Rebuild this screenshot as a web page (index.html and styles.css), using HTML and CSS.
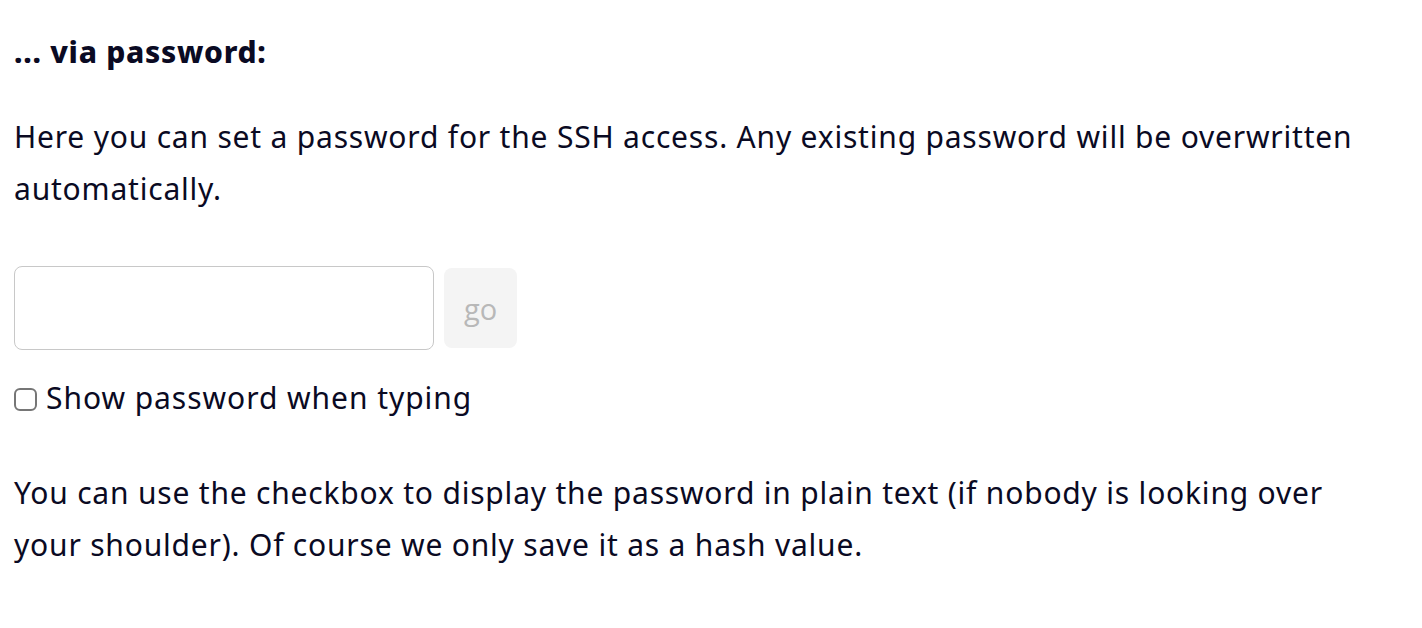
FILE: index.html
```html
<!DOCTYPE html>
<html lang="en">
<head>
<meta charset="utf-8">
<title>SSH password</title>
<link rel="stylesheet" href="styles.css">
</head>
<body>
<main class="page">
  <h3 class="title">... via password:</h3>
  <p class="text intro">Here you can set a password for the SSH access. Any existing password will be overwritten automatically.</p>
  <form class="pw-form">
    <input class="pw-input" type="password">
    <button class="go-btn" type="button" disabled>go</button>
  </form>
  <label class="show-row"><span class="box"></span><span class="show-label">Show password when typing</span></label>
  <p class="text outro">You can use the checkbox to display the password in plain text (if nobody is looking over your shoulder). Of course we only save it as a hash value.</p>
</main>
</body>
</html>
```

FILE: styles.css
```css
html, body {
  margin: 0;
  padding: 0;
  background: #ffffff;
}
.page {
  padding: 26px 14px 0 14px;
  font-family: "Noto Sans", "Open Sans", sans-serif;
  font-size: 30px;
  letter-spacing: 0.8px;
  line-height: 52px;
  color: #0a0a23;
  width: 1362px;
}
.title {
  margin: 0;
  font-size: 30px;
  font-weight: 800;
  letter-spacing: 0.7px;
  line-height: 52px;
}
.text {
  margin: 0;
}
.intro {
  margin-top: 33px;
}
.pw-form {
  display: flex;
  align-items: center;
  gap: 10px;
  margin-top: 51px;
}
.pw-input {
  box-sizing: border-box;
  width: 420px;
  height: 84px;
  border: 1px solid #c8c8c8;
  border-radius: 8px;
  margin: 0;
  padding: 0 16px;
  font: inherit;
  background: #fff;
}
.go-btn {
  box-sizing: border-box;
  width: 73px;
  height: 80px;
  border: none;
  border-radius: 8px;
  background: #f4f4f4;
  color: #b8b8b8;
  font-family: "Open Sans", "Noto Sans", sans-serif;
  font-size: 29px;
  letter-spacing: 0;
  padding: 0;
  margin: 0;
}
.show-row {
  display: flex;
  align-items: center;
  gap: 9px;
  margin-top: 22px;
  height: 52px;
}
.show-label {
  letter-spacing: 0.95px;
}
.box {
  box-sizing: border-box;
  width: 23px;
  height: 23px;
  border: 2px solid #767676;
  border-radius: 6px;
  margin-left: 0;
  margin-top: 3px;
}
.outro {
  margin-top: 43px;
}
```
